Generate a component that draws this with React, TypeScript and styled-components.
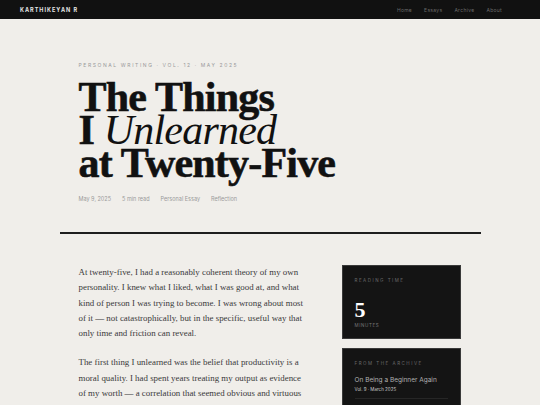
import styled, { createGlobalStyle } from "styled-components";

const GlobalStyle = createGlobalStyle`
    html, body {
        margin: 0;
        padding: 0;
        background: #f0eeea;
    }
    * {
        box-sizing: border-box;
    }
`;

const sans = `Inter, "Noto Sans", "Liberation Sans", sans-serif`;
const serif = `"Liberation Serif", "DejaVu Serif", serif`;

const Page = styled.div`
    min-height: 405px;
    background: #f0eeea;
    font-family: ${sans};
`;

const TopBar = styled.header`
    height: 19px;
    background: #111111;
    display: flex;
    align-items: center;
    justify-content: space-between;
    padding: 0 38px 0 20px;
`;

const Brand = styled.div`
    font-size: 5.5px;
    font-weight: 700;
    letter-spacing: 1px;
    color: #e4e4e4;
    text-transform: uppercase;
`;

const Nav = styled.nav`
    display: flex;
    gap: 12px;
`;

const NavLink = styled.a`
    font-size: 5px;
    letter-spacing: 0.3px;
    color: #6a6a6a;
    text-decoration: none;
`;

const Container = styled.main`
    width: 421px;
    margin: 0 auto;
`;

const Hero = styled.section`
    padding: 43px 19px 30px;
`;

const Eyebrow = styled.div`
    font-size: 5px;
    letter-spacing: 1.6px;
    color: #9a9a9a;
    text-transform: uppercase;
`;

const Title = styled.h1`
    margin: 13px 0 0;
    font-family: ${serif};
    font-weight: 700;
    font-size: 42px;
    line-height: 33px;
    letter-spacing: -0.8px;
    color: #111111;
    -webkit-text-stroke: 0.6px #111111;
`;

const Italic = styled.em`
    font-weight: 400;
    font-style: italic;
    -webkit-text-stroke: 0;
`;

const Meta = styled.div`
    display: flex;
    gap: 11px;
    margin-top: 16px;
    font-size: 5.5px;
    color: #9a9a9a;
`;

const Rule = styled.hr`
    margin: 0;
    border: 0;
    border-top: 2px solid #1e1e1e;
`;

const Body = styled.div`
    display: grid;
    grid-template-columns: 1fr 119px;
    gap: 37px;
    padding: 31px 20px 0 19px;
`;

const Article = styled.article`
    font-family: ${serif};
    font-size: 8.9px;
    line-height: 15.3px;
    color: #3a3a3a;
`;

const Para = styled.p`
    margin: 0 0 14px;
`;

const Aside = styled.aside`
    display: flex;
    flex-direction: column;
    gap: 9px;
`;

const Card = styled.div<{ pad: string }>`
    background: #141414;
    border: 1px solid #3a3a3a;
    padding: ${(p) => p.pad};
`;

const CardLabel = styled.div`
    font-size: 4.5px;
    letter-spacing: 1.5px;
    color: #6a6a6a;
    text-transform: uppercase;
`;

const BigNumber = styled.div`
    margin-top: 17px;
    font-family: ${serif};
    font-weight: 700;
    font-size: 22px;
    line-height: 20px;
    color: #ffffff;
`;

const Unit = styled.div`
    margin-top: 3px;
    font-size: 4.5px;
    letter-spacing: 0.6px;
    color: #777777;
    text-transform: uppercase;
`;

const ArchiveItem = styled.div<{ last?: boolean }>`
    padding: 10px 0 6px;
    border-bottom: ${(p) => (p.last ? "none" : "1px solid #262626")};
`;

const ArchiveTitle = styled.div`
    font-size: 6.5px;
    color: #b0b0b0;
`;

const ArchiveMeta = styled.div`
    margin-top: 3px;
    font-size: 4.5px;
    color: #cccccc;
`;

const archive = [
    { title: "On Being a Beginner Again", meta: "Vol. 9 · March 2025" },
    { title: "The Quiet Art of Saying No", meta: "Vol. 8 · January 2025" },
];

const App = (): JSX.Element => {
    return (
        <Page>
            <GlobalStyle />
            <TopBar>
                <Brand>Karthikeyan R</Brand>
                <Nav>
                    <NavLink>Home</NavLink>
                    <NavLink>Essays</NavLink>
                    <NavLink>Archive</NavLink>
                    <NavLink>About</NavLink>
                </Nav>
            </TopBar>
            <Container>
                <Hero>
                    <Eyebrow>Personal Writing · Vol. 12 · May 2025</Eyebrow>
                    <Title>
                        The Things
                        <br />I <Italic>Unlearned</Italic>
                        <br />
                        at Twenty-Five
                    </Title>
                    <Meta>
                        <span>May 9, 2025</span>
                        <span>5 min read</span>
                        <span>Personal Essay</span>
                        <span>Reflection</span>
                    </Meta>
                </Hero>
                <Rule />
                <Body>
                    <Article>
                        <Para>
                            At twenty-five, I had a reasonably coherent theory of my own personality. I knew what I
                            liked, what I was good at, and what kind of person I was trying to become. I was wrong
                            about most of it — not catastrophically, but in the specific, useful way that only time
                            and friction can reveal.
                        </Para>
                        <Para>
                            The first thing I unlearned was the belief that productivity is a moral quality. I had
                            spent years treating my output as evidence of my worth — a correlation that seemed obvious
                            and virtuous right up until it quietly started deciding what I was allowed to rest.
                        </Para>
                    </Article>
                    <Aside>
                        <Card pad="12px 12px 10px">
                            <CardLabel>Reading Time</CardLabel>
                            <BigNumber>5</BigNumber>
                            <Unit>Minutes</Unit>
                        </Card>
                        <Card pad="12px 12px 4px">
                            <CardLabel>From the Archive</CardLabel>
                            {archive.map((a, i) => (
                                <ArchiveItem key={a.title} last={i === archive.length - 1}>
                                    <ArchiveTitle>{a.title}</ArchiveTitle>
                                    <ArchiveMeta>{a.meta}</ArchiveMeta>
                                </ArchiveItem>
                            ))}
                        </Card>
                    </Aside>
                </Body>
            </Container>
        </Page>
    );
};

export default App;
